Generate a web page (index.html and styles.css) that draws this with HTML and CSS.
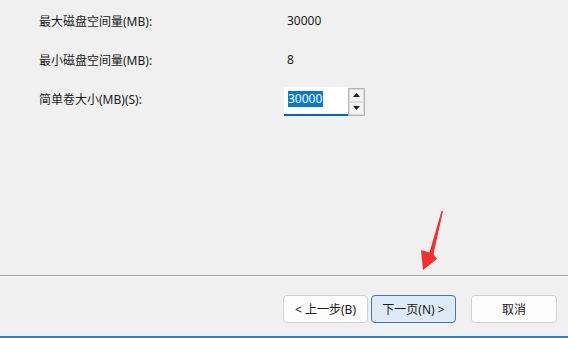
FILE: index.html
```html
<!DOCTYPE html>
<html lang="zh-CN">
<head>
    <meta charset="UTF-8">
    <meta name="viewport" content="width=device-width, initial-scale=1.0">
    <title>新建简单卷向导</title>
    <link rel="stylesheet" href="styles.css">
</head>
<body>
    <div class="wizard">
        <div class="content">
            <div class="field-grid">
                <div class="label">最大磁盘空间量(MB):</div>
                <div class="value">30000</div>

                <div class="label">最小磁盘空间量(MB):</div>
                <div class="value">8</div>

                <div class="label">简单卷大小(MB)(S):</div>
                <div class="spin-box">
                    <div class="spin-input"><span class="selected">30000</span></div>
                    <div class="spin-buttons">
                        <div class="spin-btn">
                            <svg width="7" height="4" viewBox="0 0 7 4"><path d="M0 4 L3.5 0 L7 4 Z" fill="#222"/></svg>
                        </div>
                        <div class="spin-btn">
                            <svg width="7" height="4" viewBox="0 0 7 4"><path d="M0 0 L7 0 L3.5 4 Z" fill="#222"/></svg>
                        </div>
                    </div>
                </div>
            </div>
        </div>

        <div class="divider"></div>

        <div class="footer">
            <button class="btn">&lt; 上一步(B)</button>
            <button class="btn btn-default">下一页(N) &gt;</button>
            <button class="btn btn-cancel">取消</button>
        </div>
    </div>

    <!-- red pointer drawn over the dialog -->
    <svg class="pointer" width="568" height="338" viewBox="0 0 568 338">
        <path d="M443 211 L433.5 254 L437 259 L423 270 L421 250 L429.5 252.5 L441.5 211 Z" fill="#f2302f"/>
    </svg>
</body>
</html>
```

FILE: styles.css
```css
* {
    margin: 0;
    padding: 0;
    box-sizing: border-box;
}

body {
    background: #f0f0f0;
    font-family: 'Noto Sans', 'Noto Sans CJK SC', sans-serif;
    font-size: 12px;
    color: #1a1a1a;
    width: 568px;
    height: 338px;
    overflow: hidden;
    position: relative;
}

.wizard {
    display: flex;
    flex-direction: column;
    height: 100%;
}

.content {
    flex: 1;
}

.field-grid {
    display: grid;
    grid-template-columns: 245px auto;
    grid-auto-rows: 39px;
    align-items: center;
    padding: 1px 0 0 39px;
}

.value {
    padding-left: 3px;
}

.spin-box {
    display: flex;
    align-items: stretch;
    height: 29px;
    margin-top: 5px;
}

.spin-input {
    width: 64px;
    background: #fff;
    border-bottom: 2px solid #0067c0;
    padding: 3px 0 0 4px;
}

.selected {
    background: #0078d7;
    color: #fff;
    display: inline-block;
    line-height: 16px;
    padding-right: 1px;
}

.spin-buttons {
    width: 17px;
    display: flex;
    flex-direction: column;
    border: 1px solid #b5b5b5;
    background: #fff;
    margin-top: 1px;
}

.spin-btn {
    flex: 1;
    display: flex;
    align-items: center;
    justify-content: center;
    background: #f4f4f4;
    border: 1px solid #dcdcdc;
}

.divider {
    height: 2px;
    border-top: 1px solid #a0a0a0;
    border-bottom: 1px solid #fcfcfc;
}

.footer {
    height: 61px;
    display: flex;
    justify-content: flex-end;
    align-items: flex-start;
    gap: 3px;
    padding: 18px 11px 0 0;
    border-bottom: 2px solid #1a86d4;
}

.btn {
    width: 85px;
    height: 28px;
    font-family: inherit;
    font-size: 12px;
    color: #1a1a1a;
    background: #fdfdfd;
    border: 1px solid #d0d0d0;
    border-radius: 4px;
}

.btn-default {
    background: #dde9f5;
    border-color: #3d78b8;
}

.btn-cancel {
    width: 86px;
    margin-left: 12px;
}

.pointer {
    position: absolute;
    top: 0;
    left: 0;
    pointer-events: none;
}
```
